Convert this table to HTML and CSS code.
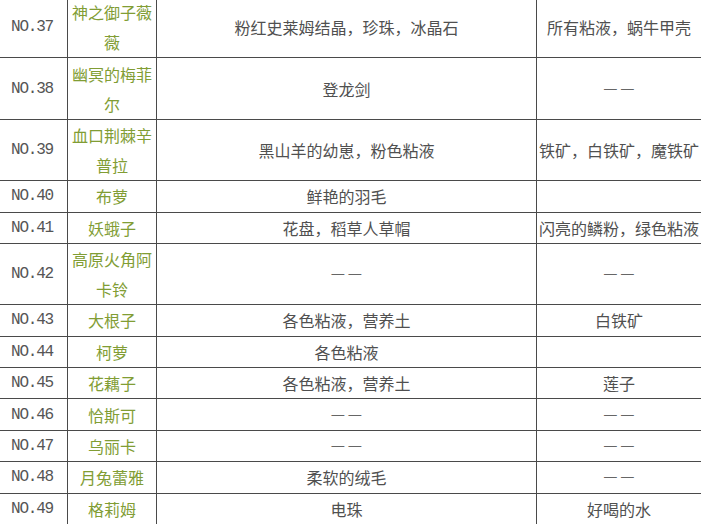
FILE: index.html
```html
<!DOCTYPE html>
<html lang="zh-CN">
<head>
<meta charset="utf-8">
<title>掉落表</title>
<link rel="stylesheet" href="styles.css">
</head>
<body>
<table class="drops">
  <colgroup>
    <col class="c-no"><col class="c-name"><col class="c-item"><col class="c-extra">
  </colgroup>
  <tbody>
    <tr><td class="no">NO.37</td><td class="name">神之御子薇薇</td><td>粉红史莱姆结晶，珍珠，冰晶石</td><td>所有粘液，蜗牛甲壳</td></tr>
    <tr><td class="no">NO.38</td><td class="name">幽冥的梅菲尔</td><td>登龙剑</td><td><span class="dash">—</span><span class="dash">—</span></td></tr>
    <tr><td class="no">NO.39</td><td class="name">血口荆棘辛普拉</td><td>黑山羊的幼崽，粉色粘液</td><td>铁矿，白铁矿，魔铁矿</td></tr>
    <tr><td class="no">NO.40</td><td class="name">布萝</td><td>鲜艳的羽毛</td><td></td></tr>
    <tr><td class="no">NO.41</td><td class="name">妖蛾子</td><td>花盘，稻草人草帽</td><td>闪亮的鳞粉，绿色粘液</td></tr>
    <tr><td class="no">NO.42</td><td class="name">高原火角阿卡铃</td><td><span class="dash">—</span><span class="dash">—</span></td><td><span class="dash">—</span><span class="dash">—</span></td></tr>
    <tr><td class="no">NO.43</td><td class="name">大根子</td><td>各色粘液，营养土</td><td>白铁矿</td></tr>
    <tr><td class="no">NO.44</td><td class="name">柯萝</td><td>各色粘液</td><td></td></tr>
    <tr><td class="no">NO.45</td><td class="name">花藕子</td><td>各色粘液，营养土</td><td>莲子</td></tr>
    <tr><td class="no">NO.46</td><td class="name">恰斯可</td><td><span class="dash">—</span><span class="dash">—</span></td><td><span class="dash">—</span><span class="dash">—</span></td></tr>
    <tr><td class="no">NO.47</td><td class="name">乌丽卡</td><td><span class="dash">—</span><span class="dash">—</span></td><td><span class="dash">—</span><span class="dash">—</span></td></tr>
    <tr><td class="no">NO.48</td><td class="name">月兔蕾雅</td><td>柔软的绒毛</td><td><span class="dash">—</span><span class="dash">—</span></td></tr>
    <tr><td class="no">NO.49</td><td class="name">格莉姆</td><td>电珠</td><td>好喝的水</td></tr>
  </tbody>
</table>
</body>
</html>
```
FILE: styles.css
```css
html, body {
  margin: 0;
  padding: 0;
  background: #ffffff;
  overflow: hidden;
}

.drops {
  margin: -4px 0 0 -4px;
  border-collapse: collapse;
  table-layout: fixed;
  width: 705px;
  font-family: "Noto Sans CJK SC", "Noto Sans", sans-serif;
  font-size: 16px;
  line-height: 30px;
  color: #505050;
}

.c-no { width: 71px; }
.c-name { width: 89px; }
.c-item { width: 380px; }
.c-extra { width: 165px; }

.drops td {
  border: 1px solid #4a4a4a;
  padding: 0.2px 0;
  text-align: center;
  vertical-align: middle;
  word-break: break-all;
}

.drops td.no {
  font-family: "Liberation Mono", "DejaVu Sans Mono", monospace;
  font-size: 16px;
  letter-spacing: -1.2px;
  color: #555555;
}

.drops td.name {
  color: #819d34;
}

.dash {
  display: inline-block;
  vertical-align: top;
  width: 15px;
  margin: 0 1px;
  font-size: 16px;
  line-height: 26px;
  color: #666666;
}
```
